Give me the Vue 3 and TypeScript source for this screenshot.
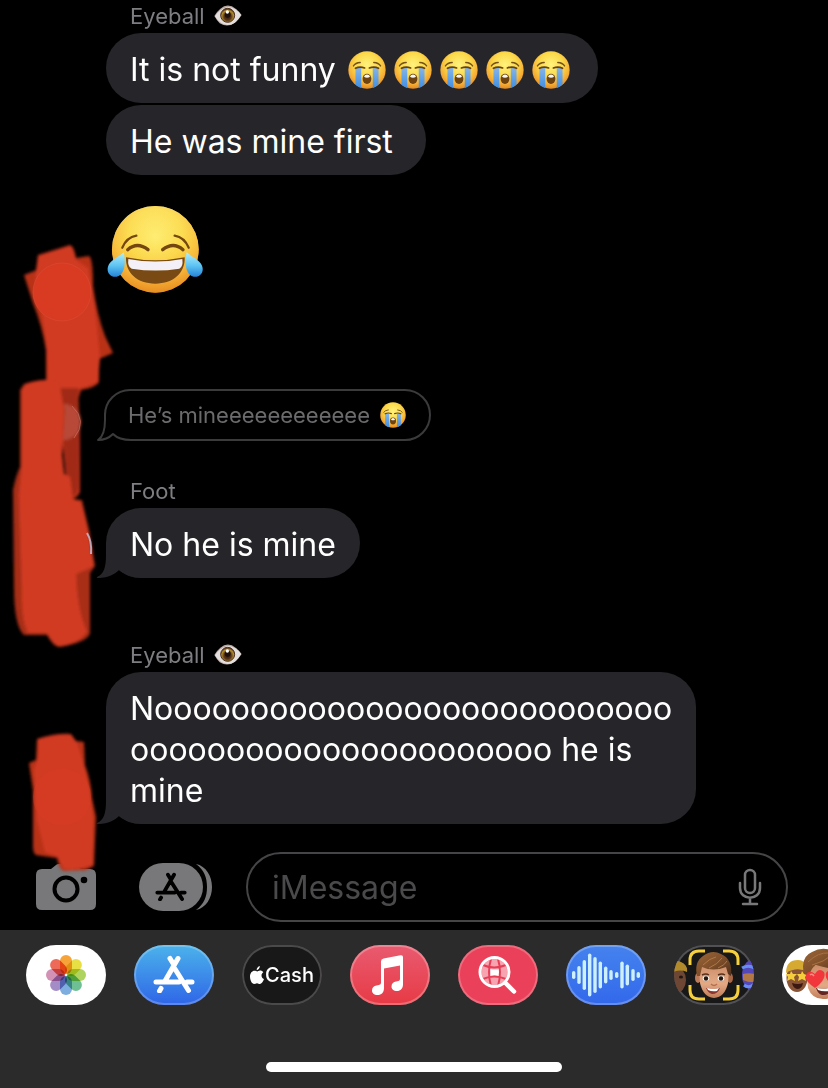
<script setup lang="ts">
import { ref } from 'vue'

interface Message {
  id: number
  sender?: string
  eye?: boolean
  text: string
  sobs?: number
  kind: 'bubble' | 'joy' | 'reply'
  tail?: boolean
  gap: string
}

const messages: Message[] = [
  { id: 1, sender: 'Eyeball', eye: true, text: 'It is not funny ', sobs: 5, kind: 'bubble', gap: 'gap-top' },
  { id: 2, text: 'He was mine first\u00a0', kind: 'bubble', gap: 'gap-run' },
  { id: 3, text: '', kind: 'joy', gap: 'gap-joy' },
  { id: 4, text: 'He’s mineeeeeeeeeeee', sobs: 1, kind: 'reply', gap: 'gap-reply' },
  { id: 5, sender: 'Foot', text: 'No he is mine', kind: 'bubble', tail: true, gap: 'gap-near' },
  {
    id: 6,
    sender: 'Eyeball',
    eye: true,
    text: 'N' + 'o'.repeat(27) + '\n' + 'o'.repeat(22) + ' he is\nmine',
    kind: 'bubble',
    tail: true,
    gap: 'gap-far',
  },
]

const petals = ['#f59a23', '#e5dc2f', '#a5cf4c', '#5fb88a', '#6fa5dc', '#9a80c0', '#cf86ad', '#ea5a45']
const bars = [
  [5, 8], [10.3, 18], [15.6, 30], [21, 43], [26.3, 36], [31.6, 27], [37, 17],
  [42.3, 10], [48, 6], [53.3, 27], [58.6, 21], [64.3, 12], [69.6, 6],
]
const draft = ref('')
</script>

<template>
  <div class="screen">
    <svg class="defs" aria-hidden="true">
      <defs>
        <linearGradient id="face" x1="0" y1="0" x2="0" y2="1">
          <stop offset="0" stop-color="#fff08a" />
          <stop offset=".45" stop-color="#fddc4e" />
          <stop offset="1" stop-color="#ee9426" />
        </linearGradient>
        <radialGradient id="faceGlow" cx=".5" cy=".36" r=".64">
          <stop offset="0" stop-color="#fff27c" />
          <stop offset=".5" stop-color="#fbd94a" />
          <stop offset=".8" stop-color="#f6ae35" />
          <stop offset="1" stop-color="#e58a20" />
        </radialGradient>
        <linearGradient id="tear" x1="0" y1="0" x2="0" y2="1">
          <stop offset="0" stop-color="#86b4e6" />
          <stop offset="1" stop-color="#3f8fe4" />
        </linearGradient>
        <linearGradient id="drop" x1="0" y1="0" x2="0" y2="1">
          <stop offset="0" stop-color="#b4f0fc" />
          <stop offset=".55" stop-color="#5cc3f2" />
          <stop offset="1" stop-color="#2583d8" />
        </linearGradient>
        <symbol id="sob" viewBox="0 0 112 112">
          <circle cx="56" cy="56" r="55" fill="url(#faceGlow)" />
          <path d="M22 50h17v59q-9-3-17-10zM73 50h17v49q-8 7-17 10z" fill="url(#tear)" />
          <path d="M16 44q6-9 20-10M96 44q-6-9-20-10" fill="none" stroke="#75501a" stroke-width="4" stroke-linecap="round" />
          <path d="M22 51q13-7 27-1M63 50q14-6 27 1" fill="none" stroke="#694210" stroke-width="5" stroke-linecap="round" />
          <ellipse cx="56" cy="82" rx="13" ry="15" fill="#6e4310" />
          <path d="M47 76q2-7 9-7t9 7q-9 5-18 0z" fill="#f7f7f2" />
        </symbol>
        <symbol id="joy" viewBox="36 30 288 270">
          <circle cx="181" cy="163" r="130" fill="url(#face)" />
          <circle cx="181" cy="163" r="130" fill="url(#faceGlow)" opacity=".7" />
          <path d="M82 158q13-31 42-36M281 158q-13-31-42-36" fill="none" stroke="#754710" stroke-width="7" stroke-linecap="round" />
          <path d="M98 164q29-25 61 0M203 164q32-25 61 0" fill="none" stroke="#754710" stroke-width="10" stroke-linecap="round" />
          <path d="M93 187q88 18 176 0c2 47-34 79-88 79s-90-32-88-79z" fill="#794a13" />
          <path d="M100 192q81 15 162 0 3 24-9 29-71 11-143 0-13-5-10-29z" fill="#f3f1f7" />
          <path d="M86 172c8 34 2 69-21 73-19 3-31-13-26-30 5-18 27-26 47-43zM275 172c-8 34-2 69 21 73 19 3 31-13 26-30-5-18-27-26-47-43z" fill="url(#drop)" />
        </symbol>
        <radialGradient id="iris" cx=".5" cy=".6" r=".55">
          <stop offset="0" stop-color="#2a160d" />
          <stop offset=".45" stop-color="#5a3519" />
          <stop offset=".8" stop-color="#b08f2c" />
          <stop offset="1" stop-color="#5a3520" />
        </radialGradient>
        <symbol id="eye" viewBox="0 0 84 66">
          <path d="M1 33Q8 20 19 11 42-8 66 12q10 9 17 18-9 13-17 21-24 19-49 4Q9 47 1 33z" fill="#b9a7a1" />
          <path d="M3 34Q17 11 41 6q26 1 40 24-16 30-40 30-23-1-38-26z" fill="#e4dfdf" />
          <circle cx="41" cy="31" r="21" fill="url(#iris)" stroke="#4d2f1e" stroke-width="3" />
          <circle cx="41" cy="29" r="9" fill="#20110c" />
          <circle cx="40" cy="21" r="5" fill="#fff" />
        </symbol>
        <symbol id="store" viewBox="0 0 42 38">
          <g fill="none" stroke="currentColor" stroke-width="5" stroke-linecap="round">
            <path d="M3 27h23M34 27h5M17 3.500L21 10M25 3.500L12 26M8 33.500L6.500 36M22 14l13.500 21.500" />
          </g>
        </symbol>
        <linearGradient id="skin" x1="0" y1="0" x2="0" y2="1">
          <stop offset="0" stop-color="#c98b67" />
          <stop offset=".6" stop-color="#e3a985" />
          <stop offset="1" stop-color="#c17c59" />
        </linearGradient>
        <linearGradient id="hair" x1="0" y1="0" x2="1" y2="1">
          <stop offset="0" stop-color="#9b6638" />
          <stop offset=".5" stop-color="#80502b" />
          <stop offset="1" stop-color="#4e2f1b" />
        </linearGradient>
      </defs>
    </svg>

    <main class="thread">
      <article v-for="m in messages" :key="m.id" :class="['message', m.gap]">
        <header v-if="m.sender" class="sender">
          {{ m.sender }}
          <svg v-if="m.eye" class="eye" role="img" aria-label="eye"><use href="#eye" /></svg>
        </header>
        <svg v-if="m.kind === 'joy'" class="joy" role="img" aria-label="face with tears of joy"><use href="#joy" /></svg>
        <div v-else-if="m.kind === 'reply'" class="reply">
          <svg class="reply-tail" viewBox="0 0 36 28" aria-hidden="true">
            <path d="M9 2H36V28H9z" fill="#000" />
            <path d="M10 0V7C10 17 8 24 3 27 9 27 14 25 18 21 22 25 27 27 36 27" fill="none" stroke="#3b3b3d" stroke-width="2" stroke-linejoin="round" />
          </svg>
          <span class="reply-text">{{ m.text }}</span>
          <svg class="sob-small" role="img" aria-label="loudly crying face"><use href="#sob" /></svg>
        </div>
        <div v-else class="bubble">
          <svg v-if="m.tail" class="tail" viewBox="0 0 50 35" aria-hidden="true">
            <path d="M10 0V12C10 24 8 31 1 34Q0 35 3 35C12 35 19 31 23 27 29 32 36 35 46 35V0Z" />
          </svg>
          <span class="bubble-text">{{ m.text }}</span>
          <span v-if="m.sobs" class="sobs">
            <svg v-for="n in m.sobs" :key="n" class="sob" role="img" aria-label="loudly crying face"><use href="#sob" /></svg>
          </span>
        </div>
      </article>
    </main>

    <form class="composer" @submit.prevent>
      <button type="button" class="plain camera" aria-label="Camera">
        <svg viewBox="0 0 60 46">
          <path d="M6 5H15L20 1Q21 0 23 0H37Q39 0 41 2L45 5H54Q60 5 60 11V40Q60 46 54 46H6Q0 46 0 40V11Q0 5 6 5Z" fill="#78787a" />
          <circle cx="30" cy="25" r="11.500" fill="none" stroke="#000" stroke-width="4" />
          <circle cx="48" cy="16" r="3.300" fill="#000" />
        </svg>
      </button>
      <button type="button" class="plain apps" aria-label="Apps">
        <svg viewBox="0 0 73 48">
          <path d="M57 1C67 3 73 13 73 24S67 45 57 47C65 41 68 34 68 24S65 7 57 1Z" fill="#78787a" />
          <rect width="64" height="48" rx="24" fill="#78787a" />
          <svg x="16" y="9" width="32" height="29" color="#000"><use href="#store" /></svg>
        </svg>
      </button>
      <div class="field">
        <input v-model="draft" type="text" placeholder="iMessage" aria-label="iMessage" />
        <button type="button" class="plain mic" aria-label="Dictate">
          <svg viewBox="0 0 24 38" fill="none" stroke="#78787a" stroke-width="2.500" stroke-linecap="round">
            <rect x="7" y="2" width="10" height="23" rx="5" />
            <path d="M2 15v5c0 13 20 13 20 0v-5M12 30v6M5 36h14" />
          </svg>
        </button>
      </div>
    </form>

    <footer class="drawer">
      <nav class="strip" aria-label="iMessage apps">
        <button type="button" class="app photos" aria-label="Photos">
          <svg viewBox="0 0 80 60">
            <g class="petals">
              <rect v-for="(c, i) in petals" :key="c" x="34" y="10" width="12" height="19" rx="6" :fill="c" opacity=".9" :transform="`rotate(${i * 45} 40 30)`" />
            </g>
          </svg>
        </button>
        <button type="button" class="app store" aria-label="App Store">
          <svg viewBox="0 0 80 60"><svg x="19" y="10" width="42" height="38"><use href="#store" /></svg></svg>
        </button>
        <button type="button" class="app cash">
          <svg class="apple" viewBox="0 0 14 18" aria-hidden="true">
            <path d="M9.800 0C10 2 8 4.300 6.700 4.200 6.500 2.400 8 .5 9.800 0ZM13.300 6.200C10.500 8 11.200 12 14 13 13 15.800 11.500 18 9.900 18 8.600 18 8.400 17.200 7 17.200S5.300 18 4.100 18C2 18 0 14.300 0 10.500 0 7 2.100 4.700 4.500 4.700 5.700 4.700 6.500 5.400 7.200 5.400S8.700 4.600 10 4.600C11.400 4.600 12.600 5.200 13.300 6.200Z" fill="#fff" />
          </svg>
          <span>Cash</span>
        </button>
        <button type="button" class="app music" aria-label="Music">
          <svg viewBox="0 0 80 60" fill="#fff">
            <path fill-rule="evenodd" d="M31 16.500Q31 14 33.500 13.500L50.500 10.200Q53 9.800 53 12V39.500C53 43.500 50.500 46 47 46 43.500 46 41.500 44 41.500 41.500 41.500 38.500 43.500 37 46 36.500L48.500 36Q50 35.700 50 34V20.500L34 23.500V43C34 47.500 31.500 50 27.500 50 24 50 22 48 22 45.500 22 42.500 24 41 26.500 40.500L29 40Q31 39.600 31 38Z" />
          </svg>
        </button>
        <button type="button" class="app search" aria-label="Images">
          <svg viewBox="0 0 80 60" fill="none" stroke="#fff">
            <circle cx="36.500" cy="27" r="13" fill="#f7a3b0" stroke="none" />
            <path d="M32 24Q37 25 42 24 41 27 42 31 37 30 32 31 33 27 32 24Z" fill="#fff" stroke="none" />
            <path d="M25 20Q36 25 48 20M25 34Q36 29 48 34M33 14Q29 27 33 41M40 14Q44 27 40 41" stroke="#e63e56" stroke-width="2" />
            <circle cx="36.500" cy="27" r="14.500" stroke-width="3" />
            <path d="M47.500 38L56 46.500" stroke-width="4.500" stroke-linecap="round" />
          </svg>
        </button>
        <button type="button" class="app wave" aria-label="Audio">
          <svg viewBox="0 0 80 60" fill="#cdf0ff">
            <rect v-for="b in bars" :key="b[0]" :x="b[0] + 1" :y="30 - b[1] / 2" width="3.400" :height="b[1]" rx="1.700" />
          </svg>
        </button>
        <button type="button" class="app memoji" aria-label="Memoji">
          <svg viewBox="0 0 80 60">
            <ellipse cx="2" cy="35" rx="10" ry="13" fill="#6d4734" />
            <path d="M-6 25Q0 13 7 17 14 20 13 27 4 23-6 30Z" fill="#b18b2b" />
            <ellipse cx="7" cy="32" rx="2" ry="1.500" fill="#221611" />
            <ellipse cx="78" cy="30" rx="10" ry="15" fill="#5547b8" />
            <path d="M69 29Q76 27 84 30V37Q75 38 69 35Z" fill="#b47746" />
            <path d="M68 23Q75 19 82 24M70 40Q75 44 80 39" stroke="#668ef2" stroke-width="3" fill="none" />
            <ellipse cx="24" cy="33" rx="3" ry="5" fill="#bd7b59" />
            <ellipse cx="56" cy="33" rx="3" ry="5" fill="#a86745" />
            <path d="M25 24Q40 10 55 24L54 38Q51 52 40 53 29 52 26 38Z" fill="url(#skin)" />
            <path d="M23 31Q20 17 29 11 38 4 47 9 59 14 57 31L54 29 52 22Q39 27 28 22L26 31Z" fill="url(#hair)" />
            <path d="M29 20Q36 13 42 12M35 23Q44 19 48 13M44 23Q51 20 53 16" fill="none" stroke="#b07946" stroke-width="1" />
            <path d="M28 30Q32 28 35 30M44 30Q48 28 51 30" fill="none" stroke="#593019" stroke-width="1.500" />
            <ellipse cx="32" cy="33.500" rx="3.300" ry="2.400" fill="#fff" /><ellipse cx="47" cy="33.500" rx="3.300" ry="2.400" fill="#fff" />
            <circle cx="32" cy="33.500" r="2.200" fill="#241710" /><circle cx="47" cy="33.500" r="2.200" fill="#241710" />
            <path d="M37 39Q40 42 43 39" fill="none" stroke="#b56f4f" stroke-width="1.500" />
            <path d="M32 43Q40 45 46 43 44 49 38 49 34 48 32 43Z" fill="#8e332d" />
            <path d="M33 43Q40 45 45 43L43 46Q38 47 34 45Z" fill="#fff" />
            <path d="M16 20V15Q16 6 25 6H31M49 6H55Q64 6 64 15V20M64 40V45Q64 54 55 54H49M31 54H25Q16 54 16 45V40" fill="none" stroke="#f5cf3d" stroke-width="3" />
          </svg>
        </button>
        <button type="button" class="app stickers" aria-label="Stickers">
          <svg viewBox="0 0 80 60">
            <ellipse cx="15" cy="33" rx="10.500" ry="14" fill="#8a5437" />
            <path d="M4 28Q4 15 16 15 25 15 26 27 15 21 4 28Z" fill="#d6aa32" />
            <path d="M9 26l2 3 4 0-3 3 1 4-4-2-4 2 1-4-2-3 4 0zM20 26l2 3 4 0-3 3 1 4-4-2-4 2 1-4-2-3 4 0z" fill="#f6ce3c" />
            <path d="M10 38Q16 40 21 38 20 44 15 44 11 43 10 38Z" fill="#3b1812" />
            <path d="M24 26Q40 12 58 26L55 43Q50 55 41 54 30 54 26 43Z" fill="url(#skin)" />
            <path d="M22 29Q18 12 30 7 42 0 55 8L58 25Q43 23 34 20 29 23 27 31Z" fill="url(#hair)" />
            <path d="M26 17Q36 7 47 8M30 20Q42 17 50 10" fill="none" stroke="#a97141" />
            <path d="M34 43Q43 45 50 42 48 51 40 50 36 49 34 43Z" fill="#642421" />
            <path d="M35 43Q43 45 49 42L47 46Q41 47 36 45Z" fill="#fff" />
            <path d="M33 43Q22 36 24 30 27 24 33 29 37 22 42 27 45 34 33 43ZM52 42Q42 34 44 28 47 23 52 28 57 22 60 27 62 35 52 42Z" fill="#f1363c" />
            <path d="M28 30Q30 28 32 31" stroke="#ff8b82" fill="none" stroke-width="1.500" />
          </svg>
        </button>
      </nav>
      <div class="home"></div>
    </footer>

    <svg class="marker" viewBox="0 0 130 890" aria-hidden="true">
      <defs><filter id="soft"><feGaussianBlur stdDeviation="1.500" /></filter></defs>
      <g filter="url(#soft)">
        <path d="M38 255L70 245Q74 246 76 258L89 256Q93 258 93 286 97 315 105 336L113 353 99 359V382Q97 387 81 390L78 400 80 440V492Q77 500 68 499L58 395 46 389V350Q42 325 33 303L24 275 37 270Z" fill="#b93119" />
        <path d="M38 256L70 246Q74 249 76 260L88 268 94 300 100 358 98 382Q82 389 66 391L48 383Q47 340 42 315 34 292 36 270Z" fill="#d13b21" />
        <path d="M61 388H78L80 428 78 488Q76 498 67 497Z" fill="#a12b17" />
        <circle cx="63" cy="422" r="18" fill="#b84a38" />
        <path d="M24 384Q42 378 59 381L65 410 62 455 64 474 70 477 73 499 82 500 89 530 95 566 90 573V633Q88 642 60 647 54 648 47 635L24 635Q14 626 14 586L13 490Q16 475 20 467V390Z" fill="#a92e19" />
        <path d="M26 384Q42 378 59 381L64 410 62 455 64 474 70 477 73 499 81 502 88 530 94 566 76 574Q77 610 87 632 77 645 59 646 54 645 47 633L28 633Q21 619 22 590L19 495 22 465V390Z" fill="#d13b21" />
        <path d="M37 739Q56 733 71 734L76 741 84 742 85 765Q91 781 92 798L96 817 94 866 86 870 64 871Q59 870 57 858L36 855Q33 853 33 846V790L29 763 36 760Z" fill="#b93119" />
        <path d="M38 739Q56 733 71 735L77 743 83 762 90 790 93 817 93 864Q79 871 64 869L58 857 45 852 37 820 34 770 38 758Z" fill="#d13b21" />
      </g>
      <circle cx="62" cy="292" r="29" fill="#d83b22" stroke="#dc5038" stroke-opacity=".5" />
      <path d="M72 406Q88 421 74 438" fill="none" stroke="#cb7064" opacity=".7" />
      <circle cx="62" cy="797" r="29" fill="#d83b22" opacity=".5" />
      <path d="M87 533Q92 541 91 554" fill="none" stroke="#c7c4dc" stroke-width="2" opacity=".8" />
    </svg>
  </div>
</template>

<style>
html, body { margin: 0; background: #000; }
</style>

<style scoped>
.screen {
  position: relative;
  display: flex;
  flex-direction: column;
  min-height: 100vh;
  overflow: hidden;
  background: #000;
  color: #fff;
  font-family: Inter, "Liberation Sans", sans-serif;
}
.defs { position: absolute; width: 0; height: 0; }
.thread { padding: 3px 40px 28px 106px; }
.message { display: flex; flex-direction: column; align-items: flex-start; }
.gap-run { margin-top: 2px; }
.gap-joy { margin-top: 30px; }
.gap-reply { margin-top: 94px; }
.gap-near { margin-top: 37px; }
.gap-far { margin-top: 64px; }
.sender {
  display: flex;
  align-items: center;
  gap: 9px;
  height: 26px;
  margin: 0 0 4px 24px;
  color: #7d7d82;
  font-size: 22px;
  line-height: 26px;
}
.eye { width: 28px; height: 22px; }
.bubble {
  position: relative;
  display: flex;
  align-items: center;
  padding: 16px 24px 13px;
  border-radius: 35px;
  background: #26252a;
  font-size: 32px;
  line-height: 41px;
}
.bubble-text { position: relative; white-space: pre-wrap; }
.sobs { display: flex; gap: 8px; padding: 0 4px 0 3px; }
.sob { width: 38px; height: 38px; }
.tail {
  position: absolute;
  left: -10px;
  bottom: 0;
  width: 50px;
  height: 35px;
  fill: #26252a;
}
.joy { width: 96px; height: 90px; margin-left: 1px; }
.reply {
  position: relative;
  display: flex;
  align-items: center;
  gap: 10px;
  box-sizing: border-box;
  height: 52px;
  margin-left: -2px;
  padding: 0 23px 0 22px;
  border: 2px solid #3b3b3d;
  border-radius: 26px;
  color: #6b6b6e;
  font-size: 22px;
}
.reply-tail { position: absolute; left: -11px; bottom: -2px; width: 36px; height: 28px; }
.reply-text { position: relative; }
.sob-small { width: 26px; height: 26px; }
.composer { display: flex; align-items: center; padding: 0 40px 8px 36px; }
.plain { flex: none; padding: 0; border: 0; background: none; }
.plain svg { display: block; }
.camera svg { width: 60px; height: 46px; }
.apps { margin: 0 34px 0 43px; }
.apps > svg { width: 73px; height: 48px; }
.field {
  display: flex;
  flex: 1;
  align-items: center;
  box-sizing: border-box;
  min-width: 0;
  height: 70px;
  padding: 0 24px;
  border: 2px solid #454547;
  border-radius: 35px;
}
.field input {
  flex: 1;
  min-width: 0;
  padding: 0;
  border: 0;
  outline: 0;
  background: none;
  color: #fff;
  font: inherit;
  font-size: 32px;
}
.field input::placeholder { color: #4a4a4c; opacity: 1; }
.mic svg { width: 24px; height: 38px; }
.drawer {
  display: flex;
  flex: 1;
  flex-direction: column;
  align-items: center;
  justify-content: space-between;
  padding: 15px 0 16px;
  background: #2b2b2b;
}
.strip {
  display: flex;
  align-self: stretch;
  gap: 28px;
  padding-left: 26px;
  overflow: hidden;
}
.app {
  display: flex;
  flex: none;
  align-items: center;
  justify-content: center;
  width: 80px;
  height: 60px;
  padding: 0;
  overflow: hidden;
  border: 0;
  border-radius: 30px;
  color: #fff;
  font-family: inherit;
}
.app > svg:not(.apple) { width: 80px; height: 60px; }
.photos, .stickers { background: #fff; }
.petals { isolation: isolate; }
.petals rect { mix-blend-mode: multiply; }
.store { background: linear-gradient(#4bb3ea, #2f65e8); box-shadow: inset 0 0 0 2px rgba(255, 255, 255, .22); }
.cash {
  gap: 1px;
  background: #181818;
  box-shadow: inset 0 0 0 2px #4b4949;
  font-size: 20px;
  font-weight: 500;
}
.apple { width: 14px; height: 18px; }
.music { background: linear-gradient(#e95b70, #e73a45); box-shadow: inset 0 0 0 2px rgba(255, 255, 255, .25); }
.search { background: #ea4059; box-shadow: inset 0 0 0 2px rgba(255, 255, 255, .22); }
.wave { background: linear-gradient(#4583ee, #3268eb); box-shadow: inset 0 0 0 2px rgba(255, 255, 255, .25); }
.memoji { background: #181818; box-shadow: inset 0 0 0 2px #515155; }
.home { width: 296px; height: 10px; border-radius: 5px; background: #fff; }
.marker {
  position: absolute;
  top: 0;
  left: 0;
  width: 130px;
  height: 890px;
  pointer-events: none;
}
</style>
